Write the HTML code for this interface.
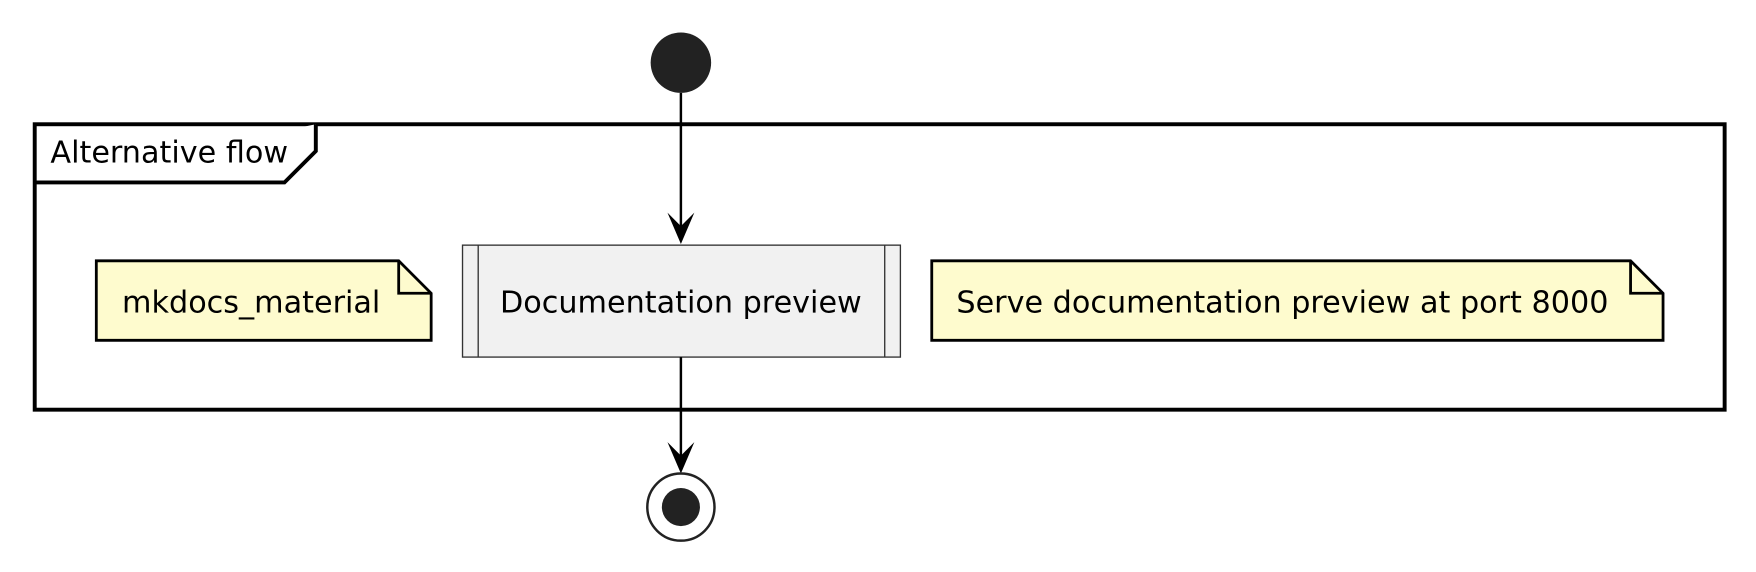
<!DOCTYPE html>
<html><head><style>html,body{margin:0;padding:0;background:#fff;width:1756px;height:572px;overflow:hidden}</style></head>
<body>
<svg width="1756" height="572" viewBox="0 0 1568 511" preserveAspectRatio="none" xmlns="http://www.w3.org/2000/svg" font-family="'DejaVu Sans', sans-serif" font-size="27">
<rect width="1568" height="511" fill="#fff"/>
<circle cx="608" cy="56" r="27" fill="#222"/>
<rect x="31" y="111" width="1509" height="255" fill="none" stroke="#000" stroke-width="3.5"/>
<path d="M31 163 H254 L282 135 V111" fill="#fff" stroke="#000" stroke-width="3.5"/>
<text x="45" y="145" fill="#000">Alternative flow</text>
<line x1="608" y1="83" x2="608" y2="210" stroke="#000" stroke-width="2.2"/>
<path d="M596 190 L608 218 L620 190 L608 202 Z" fill="#000"/>
<rect x="413" y="219" width="391" height="100" fill="#f1f1f1" stroke="#333" stroke-width="1.2"/>
<line x1="427" y1="219" x2="427" y2="319" stroke="#333" stroke-width="1.2"/>
<line x1="790" y1="219" x2="790" y2="319" stroke="#333" stroke-width="1.2"/>
<text x="608" y="279" text-anchor="middle" fill="#000">Documentation preview</text>
<path d="M86 233 H356 L385 262 V304 H86 Z" fill="#fefbce" stroke="#000" stroke-width="2.5"/>
<path d="M356 233 V262 H385" fill="none" stroke="#000" stroke-width="2.5"/>
<text x="109" y="279" fill="#000">mkdocs_material</text>
<path d="M832 233 H1456 L1485 262 V304 H832 Z" fill="#fefbce" stroke="#000" stroke-width="2.5"/>
<path d="M1456 233 V262 H1485" fill="none" stroke="#000" stroke-width="2.5"/>
<text x="854" y="279" fill="#000">Serve documentation preview at port 8000</text>
<line x1="608" y1="319" x2="608" y2="415" stroke="#000" stroke-width="2.2"/>
<path d="M596 395 L608 423 L620 395 L608 407 Z" fill="#000"/>
<circle cx="608" cy="453" r="30" fill="#fff" stroke="#222" stroke-width="2.2"/>
<circle cx="608" cy="453" r="17" fill="#222"/>
</svg>
</body></html>
